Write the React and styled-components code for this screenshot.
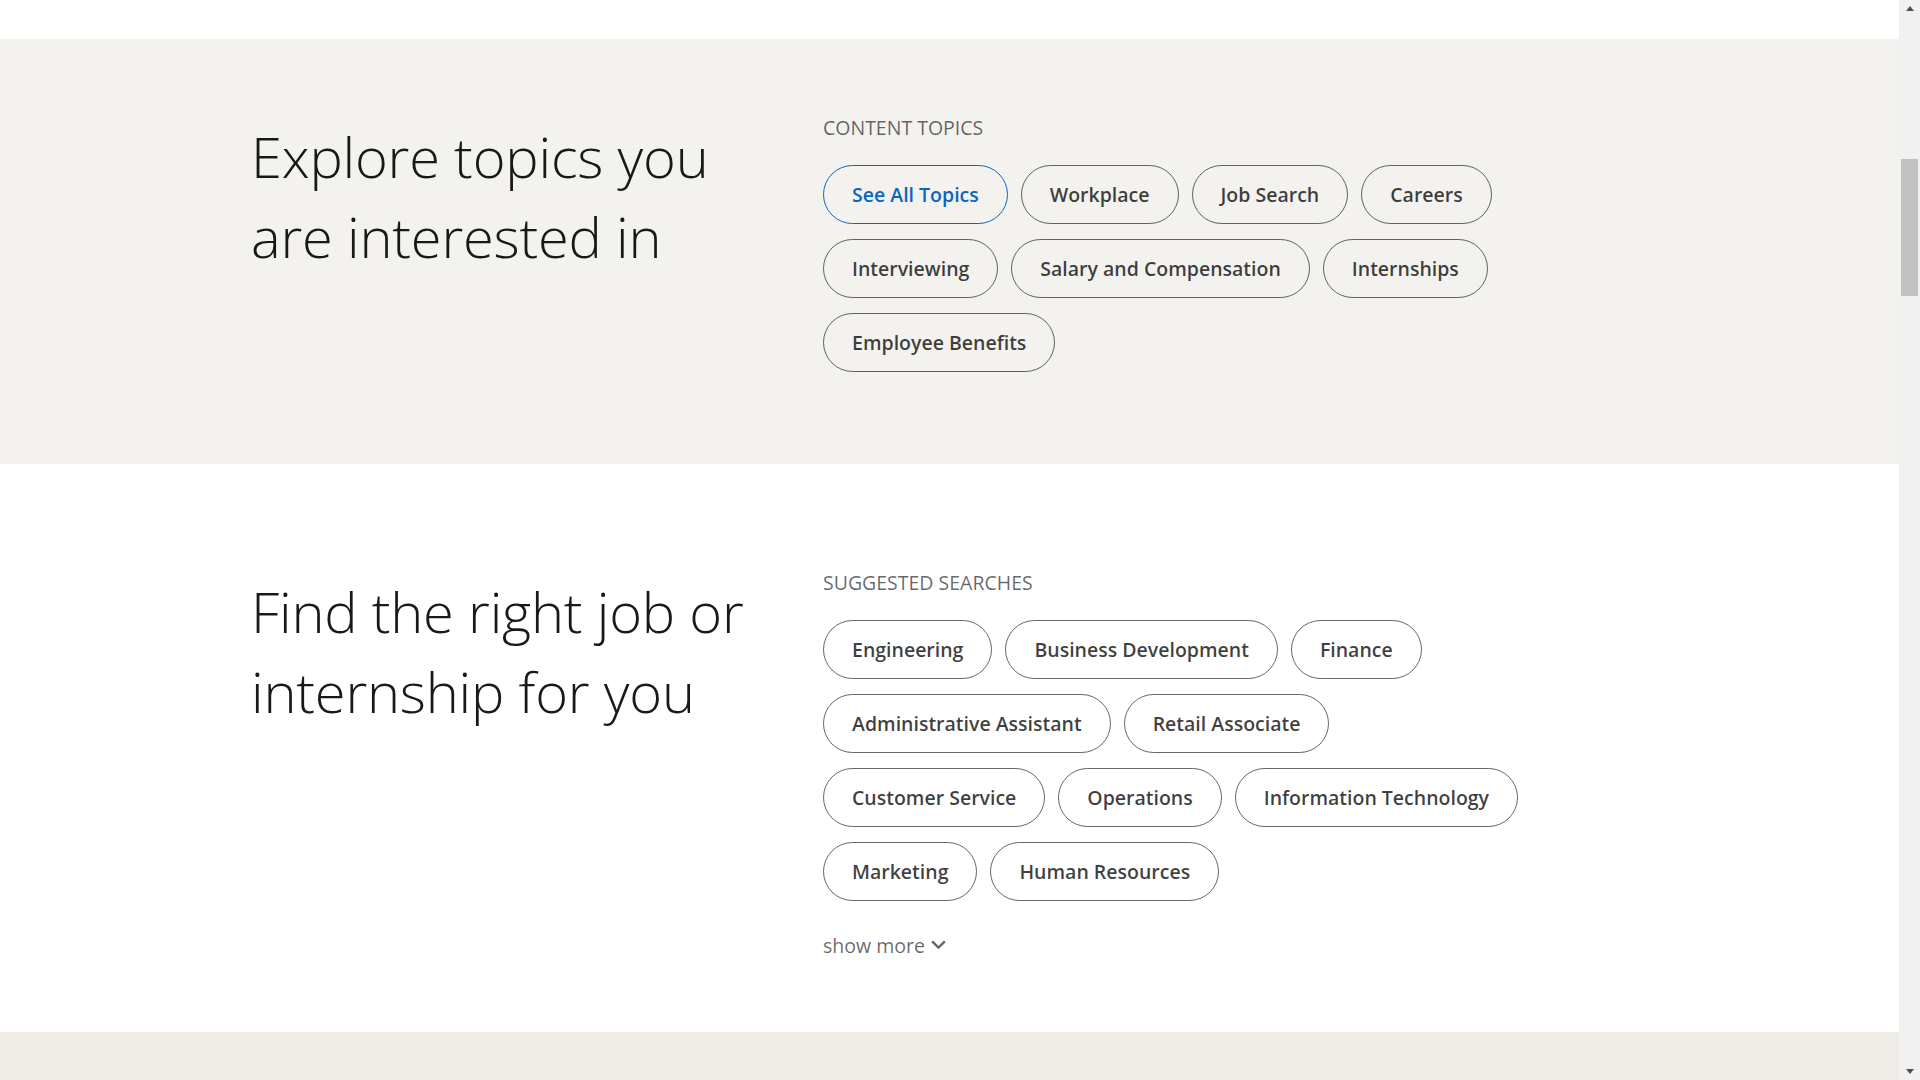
import React from 'react';
import styled, { createGlobalStyle } from 'styled-components';

const GlobalStyle = createGlobalStyle`
  body {
    margin: 0;
    background: #fff;
    font-family: "Open Sans", "Noto Sans", "Liberation Sans", sans-serif;
    -webkit-font-smoothing: antialiased;
  }
`

// window scrollbar as it shows in the capture, drawn over the right edge
const ScrollTrack = styled.div`
  position: fixed;
  top: 0;
  right: 0;
  bottom: 0;
  width: 21px;
  background: #f1f1f1;
  display: flex;
  flex-direction: column;
  align-items: center;
  justify-content: space-between;
  z-index: 10;
`

const ScrollArrow = styled.div`
  height: 17px;
  display: flex;
  align-items: center;
  justify-content: center;

  &::before {
    content: '';
    border-left: 4.5px solid transparent;
    border-right: 4.5px solid transparent;
    ${({down}) => down ? 'border-top: 5px solid #505050;' : 'border-bottom: 5px solid #505050;'}
  }
`

const ScrollThumb = styled.div`
  position: absolute;
  top: 159px;
  left: 2px;
  width: 17px;
  height: 137px;
  background: #c1c1c1;
`

const TopTail = styled.div`
  height: 39px;
  background: #fff;
`

const Section = styled.section`
  background: ${({tone}) => tone === 'gray' ? '#f3f2ef' : tone === 'sand' ? '#efebe6' : '#fff'};
  padding: ${({pad}) => pad};
`

const Inner = styled.div`
  display: flex;
  padding-left: 251px;
`

const Heading = styled.h2`
  flex: 0 0 572px;
  margin: 0;
  font-size: 56px;
  font-weight: 300;
  line-height: 80px;
  color: rgba(0, 0, 0, 0.9);
  letter-spacing: -0.2px;
`

const Column = styled.div`
  width: 720px;
`

const Label = styled.h3`
  margin: 0 0 25px;
  font-size: 19.5px;
  font-weight: 400;
  line-height: 24px;
  text-transform: uppercase;
  color: rgba(0, 0, 0, 0.6);
`

const PillList = styled.ul`
  display: flex;
  flex-wrap: wrap;
  gap: 15px 13px;
  margin: 0;
  padding: 0;
  list-style: none;
`

const Pill = styled.a`
  display: inline-flex;
  align-items: center;
  height: 59px;
  box-sizing: border-box;
  padding: 0 28px;
  border-radius: 30px;
  border: 1px solid ${({primary}) => primary ? '#0a66c2' : 'rgba(0, 0, 0, 0.6)'};
  color: ${({primary}) => primary ? '#0a66c2' : 'rgba(0, 0, 0, 0.75)'};
  font-size: 19.5px;
  font-weight: 600;
  white-space: nowrap;
  text-decoration: none;
  cursor: pointer;
`

const ShowMore = styled.button`
  display: flex;
  align-items: center;
  gap: 5px;
  margin-top: 31px;
  padding: 0;
  border: 0;
  background: none;
  font-family: inherit;
  font-size: 19.5px;
  line-height: 28px;
  color: rgba(0, 0, 0, 0.6);
  cursor: pointer;
`

const Footerish = styled.div`
  height: 120px;
  background: #efebe6;
`

const TOPICS = ['Workplace', 'Job Search', 'Careers', 'Interviewing', 'Salary and Compensation', 'Internships', 'Employee Benefits'];
const SEARCHES = ['Engineering', 'Business Development', 'Finance', 'Administrative Assistant', 'Retail Associate',
  'Customer Service', 'Operations', 'Information Technology', 'Marketing', 'Human Resources'];

const Chevron = () => (
  <svg width="17" height="17" viewBox="0 0 16 16" fill="none" style={{marginTop: -4}}>
    <path d="M2 5l6 6 6-6" stroke="currentColor" strokeWidth="2.2" strokeLinejoin="round"/>
  </svg>
)

export default function App() {
  return <>
    <GlobalStyle/>
    <TopTail/>
    <Section tone="gray" pad="77px 0 92px">
      <Inner>
        <Heading>Explore topics you<br/>are interested in</Heading>
        <Column>
          <Label>Content Topics</Label>
          <PillList>
            <li><Pill primary>See All Topics</Pill></li>
            {TOPICS.map(t => <li key={t}><Pill>{t}</Pill></li>)}
          </PillList>
        </Column>
      </Inner>
    </Section>
    <Section pad="107px 0 72px">
      <Inner>
        <Heading>Find the right job or<br/>internship for you</Heading>
        <Column>
          <Label>Suggested Searches</Label>
          <PillList>
            {SEARCHES.map(t => <li key={t}><Pill>{t}</Pill></li>)}
          </PillList>
          <ShowMore>show more <Chevron/></ShowMore>
        </Column>
      </Inner>
    </Section>
    <Footerish/>
    <ScrollTrack>
      <ScrollArrow/>
      <ScrollThumb/>
      <ScrollArrow down/>
    </ScrollTrack>
  </>
}
